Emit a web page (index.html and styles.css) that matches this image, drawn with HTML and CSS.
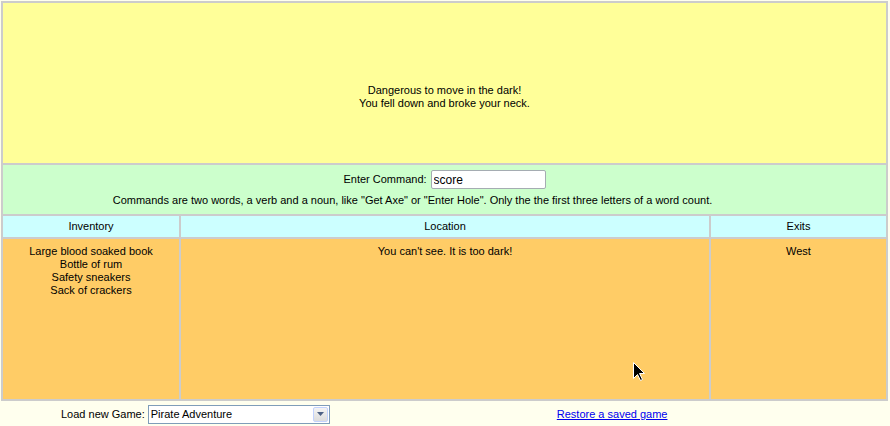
FILE: index.html
```html
<!DOCTYPE html>
<html>
<head>
<meta charset="utf-8">
<title>Adventure</title>
<link rel="stylesheet" href="styles.css">
</head>
<body>
<div class="board">
  <div class="message">
    <div>Dangerous to move in the dark!</div>
    <div>You fell down and broke your neck.</div>
  </div>
  <div class="command">
    <div class="cmd-row">
      <label class="cmd-label" for="cmd">Enter Command:</label>
      <input id="cmd" class="cmd-input" type="text" value="score">
    </div>
    <div class="cmd-help">Commands are two words, a verb and a noun, like "Get Axe" or "Enter Hole". Only the the first three letters of a word count.</div>
  </div>
  <div class="head">Inventory</div>
  <div class="head">Location</div>
  <div class="head">Exits</div>
  <div class="cell">
    <div>Large blood soaked book</div>
    <div>Bottle of rum</div>
    <div>Safety sneakers</div>
    <div>Sack of crackers</div>
  </div>
  <div class="cell"><div>You can't see. It is too dark!</div></div>
  <div class="cell"><div>West</div></div>
</div>
<div class="footer">
  <div class="load">
    <span class="load-label">Load new Game:</span>
    <div class="select">
      <span class="select-text">Pirate Adventure</span>
      <span class="select-btn"><svg width="7" height="4" viewBox="0 0 7 4"><path d="M0 0h7L3.5 4z" fill="#4d6185"/></svg></span>
    </div>
  </div>
  <a class="restore" href="#">Restore a saved game</a>
</div>
<svg class="cursor" width="12" height="19" viewBox="0 0 12 19"><path d="M0.5 0.5V16.5L4.5 12.5L7.5 18.5L9.5 17.5L6.5 11.5H11.5Z" fill="#000" stroke="#fff" stroke-width="1"/></svg>
</body>
</html>
```
FILE: styles.css
```css
html, body {
  margin: 0;
  padding: 0;
  background: #ffffee;
}
body {
  font-family: "Liberation Sans", Arial, sans-serif;
  font-size: 11px;
  line-height: 13px;
  color: #000;
  position: relative;
  height: 426px;
  overflow: hidden;
}
.board {
  margin: 1px 2px 0 1px;
  display: grid;
  grid-template-columns: 176px 528px 175px;
  grid-template-rows: 160px 49px 21px 160px;
  gap: 2px;
  padding: 2px;
  background: #cccccc;
  width: 883px;
}
.message {
  grid-column: 1 / 4;
  background: #ffff99;
  text-align: center;
  padding-top: 81px;
  box-sizing: border-box;
}
.command {
  grid-column: 1 / 4;
  background: #ccffcc;
  text-align: center;
  padding-top: 5px;
  box-sizing: border-box;
}
.cmd-row {
  display: flex;
  justify-content: center;
  align-items: center;
  gap: 4px;
  height: 19px;
}
.cmd-label {
  line-height: 13px;
}
.cmd-input {
  width: 115px;
  height: 19px;
  box-sizing: border-box;
  border: 1px solid #a5acb2;
  border-radius: 2px;
  padding: 0 2px;
  font-family: "Liberation Sans", Arial, sans-serif;
  font-size: 12px;
  background: #fff;
  outline: none;
  margin: 0;
}
.cmd-help {
  margin-top: 5px;
  padding-right: 64px;
}
.head {
  background: #ccffff;
  text-align: center;
  line-height: 21px;
}
.cell {
  background: #ffcc66;
  text-align: center;
  padding-top: 6px;
  box-sizing: border-box;
}
.footer {
  display: flex;
  align-items: center;
  height: 24px;
  padding-top: 1px;
}
.load {
  display: flex;
  align-items: center;
  margin-left: 61px;
  gap: 3px;
}
.select {
  width: 182px;
  height: 19px;
  box-sizing: border-box;
  border: 1px solid #7f9db9;
  background: #fff;
  display: flex;
  align-items: center;
  position: relative;
}
.select-text {
  flex: 1;
  padding-left: 2px;
  font-size: 11px;
}
.select-btn {
  width: 15px;
  height: 15px;
  margin-right: 1px;
  border: 1px solid #c3d3fd;
  border-radius: 2px;
  box-sizing: border-box;
  background: linear-gradient(#f4f4f4, #dcdcdc);
  display: flex;
  align-items: center;
  justify-content: center;
}
.restore {
  margin-left: 227px;
  color: #0000ee;
  text-decoration: underline;
}
.cursor {
  position: absolute;
  left: 633px;
  top: 362px;
}
```
